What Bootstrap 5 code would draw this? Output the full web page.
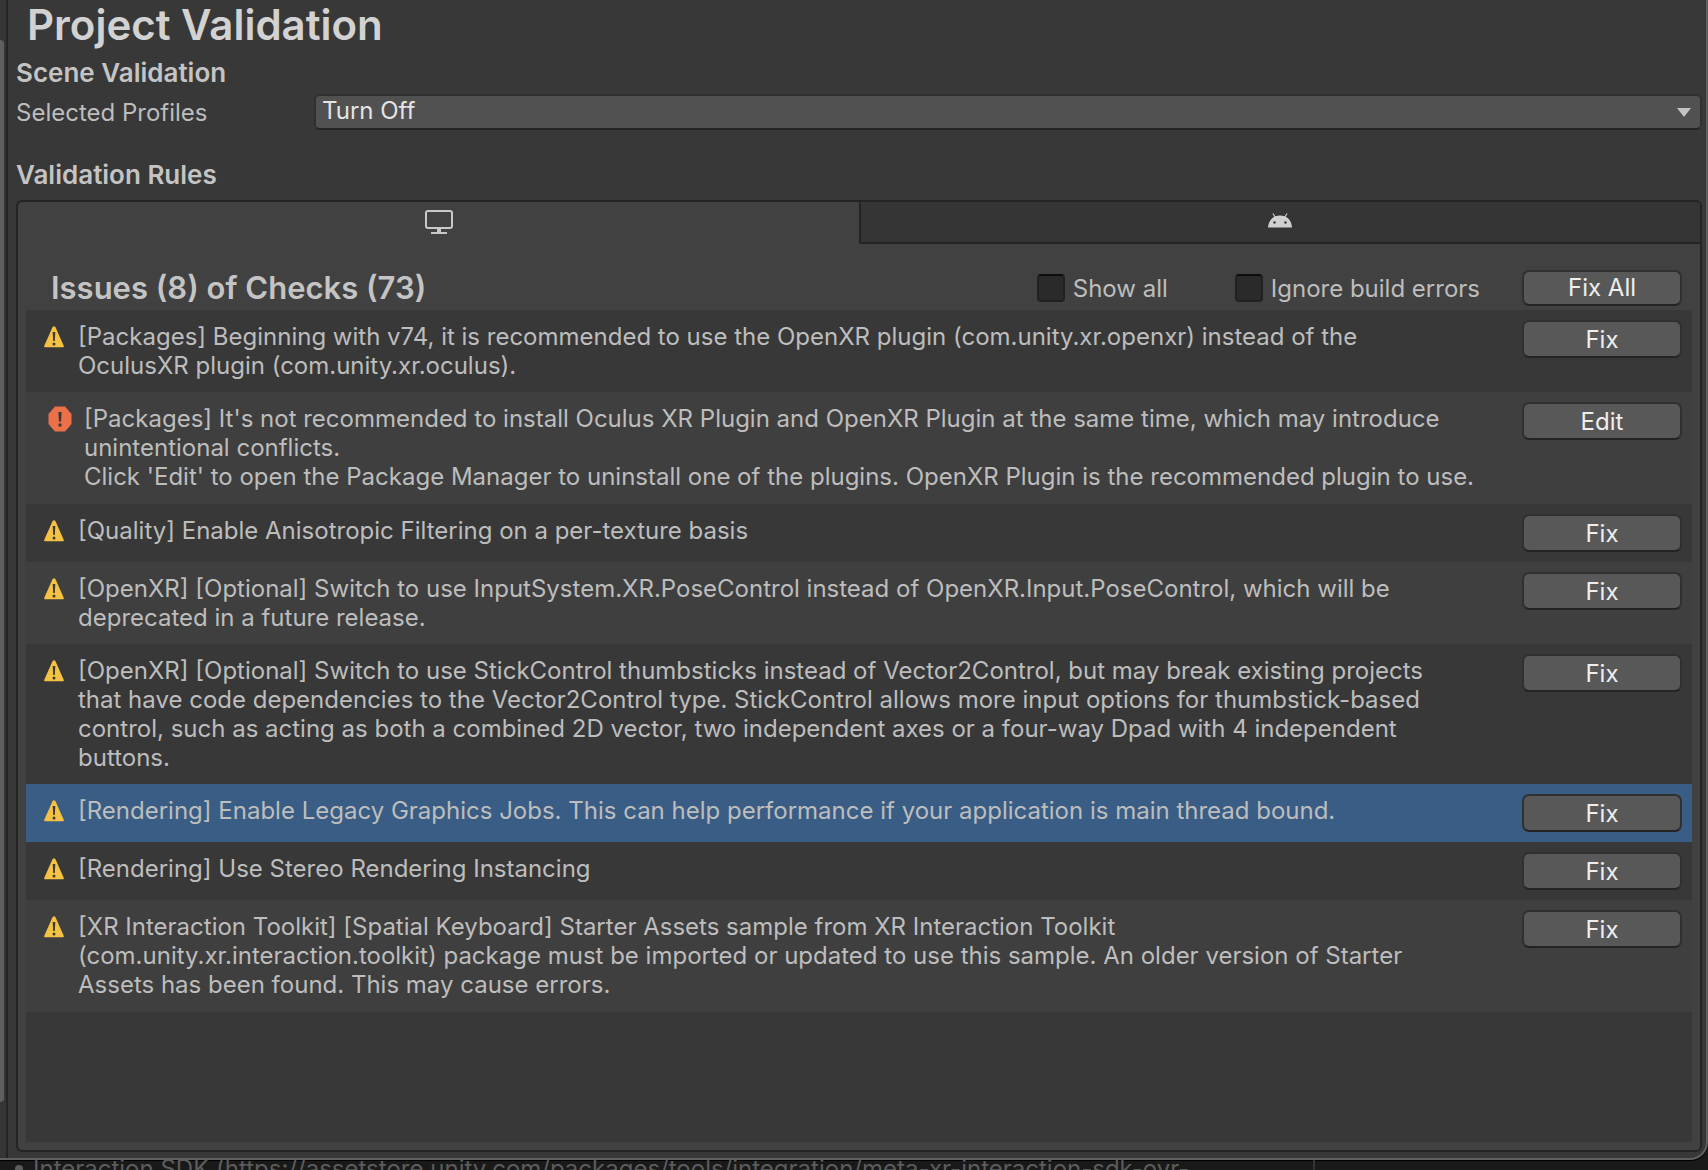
<!DOCTYPE html>
<html lang="en">
<head>
<meta charset="utf-8">
<meta name="viewport" content="width=device-width, initial-scale=1">
<title>Project Validation</title>
<link href="https://cdn.jsdelivr.net/npm/bootstrap@5.3.0/dist/css/bootstrap.min.css" rel="stylesheet">
<style>
:root { --line: #242424; --pane: #383838; --box: #414141; --txt: #bdbdbd; }
body { font-family: Inter, "Liberation Sans", sans-serif; font-size: 24px; line-height: 29px; color: var(--txt); background: #191919; }
.edge-strip { width: 8px; background: #353535; border-right: 2px solid var(--line); padding: 40px 2px 56px 0; }
.edge-thumb { background: #5f5f5f; border-radius: 0 4px 4px 0; }
.window-pane { background: var(--pane); border: solid #606060; border-width: 0 2px 2px 0; border-bottom-right-radius: 18px; box-shadow: 0 1px 0 #000; min-height: 0; }
.pane-body { padding: 0 4px 6px 8px; min-width: 0; }
.page-title, .section-title, .checks-title { font-weight: 600; }
.page-title { font-size: 42px; line-height: 50px; color: #d2d2d2; padding-left: 11px; }
.section-title { font-size: 26px; line-height: 29px; color: #c4c4c4; }
.profile-row { margin: 7px 0 30px; }
.profile-label { width: 298px; }
.profile-select { font-size: 24px; line-height: 29px; height: 36px; padding: 0 40px 3px 6px; color: #e4e4e4; background: #515151; border: 2px solid #303030; border-bottom-color: var(--line); border-radius: 6px; }
.select-wrap::after { content: ""; position: absolute; right: 11px; top: 14px; width: 14px; height: 9px; background: #c4c4c4; clip-path: polygon(0 0, 100% 0, 50% 100%); pointer-events: none; }
.rules-box { background: var(--box); border: 2px solid var(--line); border-radius: 6px; overflow: hidden; margin-top: 11px; }
.tab-btn { height: 40px; border: 0; background: transparent; padding: 0; }
.tab-btn.other { background: #353535; box-shadow: inset 2px 0 var(--line); height: 42px; border-bottom: 2px solid var(--line); padding-bottom: 4px; }
.rules-content { padding: 0 8px 8px 8px; min-height: 0; }
.checks-bar { height: 66px; padding: 26px 10px 4px 25px; }
.checks-title { font-size: 31px; line-height: 34px; color: #c4c4c4; }
.check-pair.first { margin-right: 67px; }
.check-pair.second { margin-right: 42px; }
.unity-check.form-check-input { width: 28px; height: 28px; margin: 0 8px 0 0; background-color: #2a2a2a; border: 2px solid #212121; border-top-color: #0d0d0d; border-radius: 4px; }
.unity-btn { width: 160px; height: 38px; padding: 0; font-size: 24px; line-height: 29px; color: #eee; background: #585858; border: 2px solid #303030; border-bottom-color: var(--line); border-radius: 7px; }
.unity-btn:hover { background: #676767; color: #eee; border-color: #303030; }
.unity-btn.bar-size { height: 36px; padding-bottom: 2px; }
.rule-list { background: var(--pane); min-height: 0; }
.rule-row { min-height: 58px; padding: 10px 10px 10px 18px; }
.rule-row:nth-child(even) { background: #3f3f3f; }
.rule-row.selected { background: #3a5d85; }
.rule-text { padding: 2px 0; }
.rule-text.tall { padding-bottom: 3px; }
.rule-icon { width: 20px; height: 22px; margin: 6px 14px 0 0; }
.rule-row.error { padding-left: 22px; }
.rule-row.error .rule-icon { width: 24px; height: 26px; margin: 4px 12px 0 0; }
.behind { height: 10px; color: #5c5c5c; padding-left: 15px; white-space: nowrap; overflow: hidden; }
.behind-text { width: 1300px; gap: 10px; border-right: 2px solid #333; margin-top: -6px; }
.behind-dot { width: 8px; height: 8px; border-radius: 50%; background: #5c5c5c; }
</style>
</head>
<body class="vh-100 d-flex flex-column overflow-hidden">
<svg class="d-none" aria-hidden="true">
  <symbol id="warn" viewBox="0 0 20 22"><path d="M8.600 1.100Q10-.6 11.400 1.100L19.600 19.400Q20.200 21.300 18 21.300H2Q-.2 21.300.4 19.400Z" fill="#f6c244"/><path d="M8.700 6h2.600l-.5 9H9.200z" fill="#3a3a3a"/><circle cx="10" cy="18" r="1.500" fill="#3a3a3a"/></symbol>
  <symbol id="stop" viewBox="0 0 24 26"><path d="M7 .5h10l6.500 7.500v10L17 25.500H7L.5 18V8z" fill="#ec7148"/><path d="M10.400 6h3.200l-.5 9.500h-2.200z" fill="#3a3a3a"/><circle cx="12" cy="19" r="1.700" fill="#3a3a3a"/></symbol>
</svg>
<main class="window-pane d-flex flex-grow-1">
  <div class="edge-strip d-flex flex-shrink-0"><div class="edge-thumb w-100"></div></div>
  <div class="pane-body d-flex flex-column flex-grow-1">
    <h1 class="page-title mb-0">Project Validation</h1>
    <h2 class="section-title mb-0 mt-2">Scene Validation</h2>
    <div class="profile-row d-flex align-items-center">
      <label class="profile-label flex-shrink-0" for="profiles">Selected Profiles</label>
      <div class="select-wrap position-relative flex-grow-1">
        <select class="form-select profile-select" id="profiles"><option>Turn Off</option></select>
      </div>
    </div>
    <h2 class="section-title mb-0">Validation Rules</h2>
    <section class="rules-box d-flex flex-column flex-grow-1">
      <div class="d-flex" role="tablist">
        <button class="tab-btn w-50 d-flex justify-content-center align-items-center" role="tab" aria-selected="true" aria-label="Desktop">
          <svg width="28" height="24" viewBox="0 0 28 24" fill="none" stroke="#c8c8c8" stroke-width="2"><rect x="1" y="1" width="26" height="17" rx="2"/><path d="M14 18v5" stroke-width="4"/><path d="M6 23h16"/></svg>
        </button>
        <button class="tab-btn other w-50 d-flex justify-content-center align-items-center" role="tab" aria-selected="false" aria-label="Android">
          <svg width="24" height="15" viewBox="0 0 24 15"><path d="M0 14.500C.3 9 3 5.500 6.300 3.800L4.500.8l.9-.5L7.300 3.300Q12 1.600 16.700 3.300L18.600.3l.9.5L17.700 3.800C21 5.500 23.700 9 24 14.500Z" fill="#d0d0d0"/><circle cx="6.500" cy="9.500" r="1.200" fill="#353535"/><circle cx="17.500" cy="9.500" r="1.200" fill="#353535"/></svg>
        </button>
      </div>
      <div class="rules-content d-flex flex-column flex-grow-1">
        <div class="checks-bar d-flex align-items-center">
          <h3 class="checks-title mb-0 me-auto">Issues (8) of Checks (73)</h3>
          <div class="check-pair first d-flex align-items-center"><input class="form-check-input unity-check" type="checkbox" id="showAll"><label for="showAll">Show all</label></div>
          <div class="check-pair second d-flex align-items-center"><input class="form-check-input unity-check" type="checkbox" id="ignoreErr"><label for="ignoreErr">Ignore build errors</label></div>
          <button class="btn unity-btn bar-size">Fix All</button>
        </div>
        <div class="rule-list flex-grow-1">
          <div class="rule-row d-flex align-items-start"><svg class="rule-icon flex-shrink-0"><use href="#warn"/></svg><div class="rule-text me-auto">[Packages] Beginning with v74, it is recommended to use the OpenXR plugin (com.unity.xr.openxr) instead of the<br>OculusXR plugin (com.unity.xr.oculus).</div><button class="btn unity-btn flex-shrink-0">Fix</button></div>
          <div class="rule-row error d-flex align-items-start"><svg class="rule-icon flex-shrink-0"><use href="#stop"/></svg><div class="rule-text tall me-auto">[Packages] It's not recommended to install Oculus XR Plugin and OpenXR Plugin at the same time, which may introduce<br>unintentional conflicts.<br>Click 'Edit' to open the Package Manager to uninstall one of the plugins. OpenXR Plugin is the recommended plugin to use.</div><button class="btn unity-btn flex-shrink-0">Edit</button></div>
          <div class="rule-row d-flex align-items-start"><svg class="rule-icon flex-shrink-0"><use href="#warn"/></svg><div class="rule-text me-auto">[Quality] Enable Anisotropic Filtering on a per-texture basis</div><button class="btn unity-btn flex-shrink-0">Fix</button></div>
          <div class="rule-row d-flex align-items-start"><svg class="rule-icon flex-shrink-0"><use href="#warn"/></svg><div class="rule-text me-auto">[OpenXR] [Optional] Switch to use InputSystem.XR.PoseControl instead of OpenXR.Input.PoseControl, which will be<br>deprecated in a future release.</div><button class="btn unity-btn flex-shrink-0">Fix</button></div>
          <div class="rule-row d-flex align-items-start"><svg class="rule-icon flex-shrink-0"><use href="#warn"/></svg><div class="rule-text me-auto">[OpenXR] [Optional] Switch to use StickControl thumbsticks instead of Vector2Control, but may break existing projects<br>that have code dependencies to the Vector2Control type. StickControl allows more input options for thumbstick-based<br>control, such as acting as both a combined 2D vector, two independent axes or a four-way Dpad with 4 independent<br>buttons.</div><button class="btn unity-btn flex-shrink-0">Fix</button></div>
          <div class="rule-row selected d-flex align-items-start"><svg class="rule-icon flex-shrink-0"><use href="#warn"/></svg><div class="rule-text me-auto">[Rendering] Enable Legacy Graphics Jobs. This can help performance if your application is main thread bound.</div><button class="btn unity-btn flex-shrink-0">Fix</button></div>
          <div class="rule-row d-flex align-items-start"><svg class="rule-icon flex-shrink-0"><use href="#warn"/></svg><div class="rule-text me-auto">[Rendering] Use Stereo Rendering Instancing</div><button class="btn unity-btn flex-shrink-0">Fix</button></div>
          <div class="rule-row d-flex align-items-start"><svg class="rule-icon flex-shrink-0"><use href="#warn"/></svg><div class="rule-text tall me-auto">[XR Interaction Toolkit] [Spatial Keyboard] Starter Assets sample from XR Interaction Toolkit<br>(com.unity.xr.interaction.toolkit) package must be imported or updated to use this sample. An older version of Starter<br>Assets has been found. This may cause errors.</div><button class="btn unity-btn flex-shrink-0">Fix</button></div>
        </div>
      </div>
    </section>
  </div>
</main>
<footer class="behind flex-shrink-0"><div class="behind-text d-flex align-items-center"><span class="behind-dot"></span><span>Interaction SDK (https://assetstore.unity.com/packages/tools/integration/meta-xr-interaction-sdk-ovr-</span></div></footer>
<script src="https://cdn.jsdelivr.net/npm/bootstrap@5.3.0/dist/js/bootstrap.bundle.min.js"></script>
</body>
</html>
